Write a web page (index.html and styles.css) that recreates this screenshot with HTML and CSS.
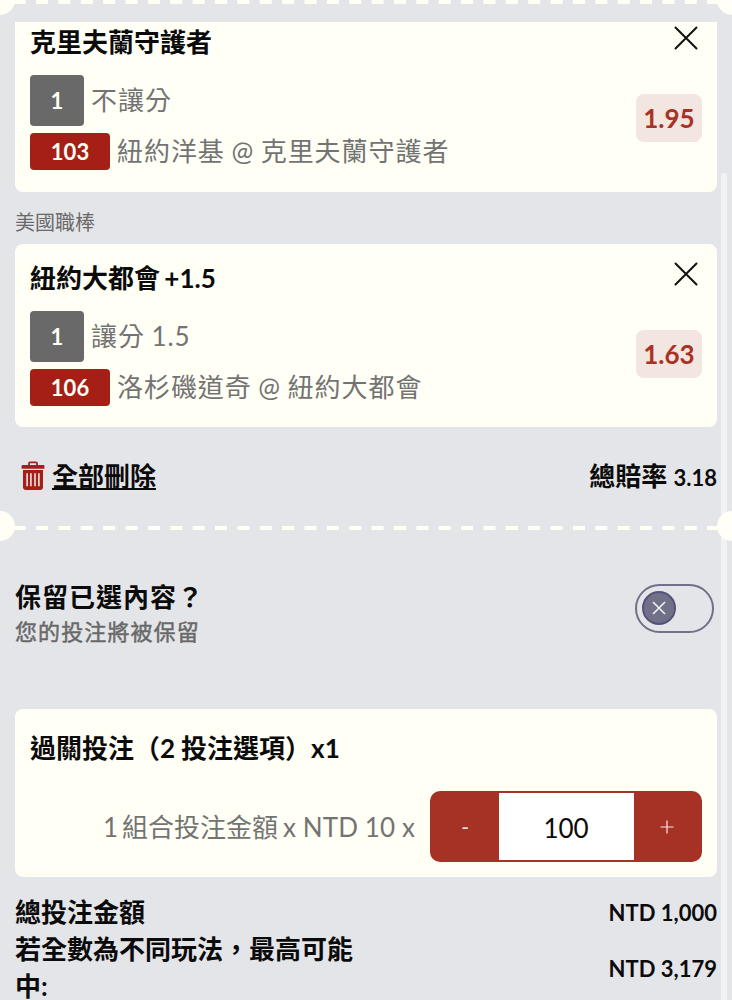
FILE: index.html
```
<!DOCTYPE html>
<html lang="zh-Hant">
<head>
<meta charset="utf-8">
<title>投注單</title>
<link rel="stylesheet" href="styles.css">
</head>
<body>
<main class="slip">
  <div class="perforation perforation-top"><i class="notch"></i><svg class="dashes" width="732" height="5"><path d="M13.7 2H722"/></svg><i class="notch notch-right"></i></div>
  <section class="card card-first">
    <div class="card-head"><h2 class="title">克里夫蘭守護者</h2><svg class="close" viewBox="0 0 24 24"><path d="M1.5 1.5 22.5 22.5M22.5 1.5 1.5 22.5"/></svg></div>
    <div class="card-body">
      <div class="bets">
        <div class="bet"><b class="count">1</b><span class="detail">不讓分</span></div>
        <div class="bet"><b class="code">103</b><span class="detail">紐約洋基 @ 克里夫蘭守護者</span></div>
      </div>
      <b class="odds">1.95</b>
    </div>
  </section>
  <p class="league">美國職棒</p>
  <section class="card">
    <div class="card-head"><h2 class="title">紐約大都會 +1.5</h2><svg class="close" viewBox="0 0 24 24"><path d="M1.5 1.5 22.5 22.5M22.5 1.5 1.5 22.5"/></svg></div>
    <div class="card-body">
      <div class="bets">
        <div class="bet"><b class="count">1</b><span class="detail">讓分 1.5</span></div>
        <div class="bet"><b class="code">106</b><span class="detail">洛杉磯道奇 @ 紐約大都會</span></div>
      </div>
      <b class="odds">1.63</b>
    </div>
  </section>
  <div class="actions">
    <a class="remove"><svg class="trash" viewBox="0 0 24 30"><path class="trash-body" fill-rule="evenodd" d="M2 9H22V26Q22 29 19 29H5Q2 29 2 26ZM5.3 12.2V25.3H6.9V12.2ZM9.1 12.2V25.3H10.7V12.2ZM13.2 12.2V25.3H14.8V12.2ZM17.1 12.2V25.3H18.7V12.2Z"/><path class="trash-body" d="M1.5 4H22.5Q23.4 4 23.4 5V7.8H.6V5Q.6 4 1.5 4Z"/><path class="trash-handle" d="M8 4V2Q8 1.3 9 1.3H15Q16 1.3 16 2V4"/></svg><span class="remove-label">全部刪除</span></a>
    <span class="total-odds">總賠率 <span class="num">3.18</span></span>
  </div>
  <div class="perforation"><i class="notch"></i><svg class="dashes" width="732" height="5"><path d="M13.7 2H722"/></svg><i class="notch notch-right"></i></div>
  <div class="keep">
    <div><div class="keep-title">保留已選內容？</div><div class="keep-note">您的投注將被保留</div></div>
    <span class="toggle"><span class="knob"><svg class="knob-x" viewBox="0 0 14 14"><path d="M1 1 13 13M13 1 1 13"/></svg></span></span>
  </div>
  <section class="card stake">
    <h2 class="title">過關投注（<span class="two">2</span>投注選項）x1</h2>
    <div class="stake-row">
      <span class="stake-label"><span class="one">1</span>組合投注金額<span class="unit">x NTD 10 x</span></span>
      <div class="stepper"><span class="step">-</span><span class="value">100</span><span class="step"><svg class="plus" viewBox="0 0 14 14"><path d="M7 .5V13.5M.5 7H13.5"/></svg></span></div>
    </div>
  </section>
  <div class="sum"><span>總投注金額</span><span class="num">NTD 1,000</span></div>
  <div class="sum"><span class="sum-label">若全數為不同玩法，最高可能中:</span><span class="num">NTD 3,179</span></div>
  <i class="scrollbar"></i>
</main>
</body>
</html>
```
FILE: styles.css
```
* { box-sizing: border-box; }
body { margin: 0; background: #e4e5e8; font-family: Lato, "Noto Sans CJK TC", sans-serif; color: #0b0b0b; }
.slip { position: relative; width: 732px; height: 1000px; overflow: hidden; padding: 0 15px; white-space: nowrap; }
h2, p { margin: 0; }

.perforation { position: relative; z-index: 2; height: 30px; margin: 0 -15px; display: flex; justify-content: space-between; }
.perforation-top { height: 30px; margin-top: -15px; }
.notch { width: 30px; height: 30px; border-radius: 50%; background: #fffff6; margin-left: -15px; }
.notch-right { margin: 0 -15px 0 0; }
.dashes { position: absolute; left: 0; top: 15px; stroke: #fffff6; stroke-width: 4; stroke-dasharray: 12 10.37; }

.card { height: 183px; padding: 15px; border-radius: 8px; background: #fffff6; }
.card-first { height: 170px; margin-top: 7px; padding-top: 1px; border-radius: 0 0 8px 8px; }
.card-head { display: flex; justify-content: space-between; height: 38px; }
.title { font-size: 26px; line-height: 38px; font-weight: 700; word-spacing: -2px; }
.close { width: 24px; height: 24px; margin: 3px 4px 0 0; stroke: #111; stroke-width: 2; stroke-linecap: round; fill: none; }
.card-body { display: flex; justify-content: space-between; margin-top: 13px; }
.bets { display: grid; align-content: start; gap: 7px; padding-top: 1px; }
.bet { display: flex; align-items: center; gap: 7px; }
.count, .code { display: flex; align-items: center; justify-content: center; color: #fffff6; font-size: 22px; border-radius: 4px; }
.count { width: 54px; height: 51px; background: #696969; }
.code { width: 80px; height: 37px; background: #a61f17; }
.detail { padding-bottom: 2px; font-size: 26px; letter-spacing: .95px; word-spacing: -1px; line-height: 34px; color: #737373; font-weight: 400; }
.odds { width: 66px; height: 48px; margin-top: 20px; border-radius: 8px; background: #f3e6e0; color: #a93226; font-size: 26px; line-height: 49px; text-align: center; }
.league { height: 52px; padding-top: 15px; font-size: 20px; line-height: 30px; color: #696969; }

.actions { display: flex; justify-content: space-between; align-items: center; height: 84px; padding-top: 15px; font-size: 26px; font-weight: 700; line-height: 38px; }
.remove { display: flex; align-items: center; gap: 7px; padding: 0 0 2px 6px; }
.trash { width: 24px; height: 30px; }
.trash-body { fill: #a61f17; }
.trash-handle { fill: none; stroke: #a61f17; stroke-width: 1.8; }
.remove-label { text-decoration: underline; text-decoration-thickness: 2px; text-underline-offset: 2px; }
.num { font-size: 22px; font-weight: 700; }

.keep { display: flex; justify-content: space-between; height: 168px; padding-top: 36px; }
.keep-title { padding-top: 1px; font-size: 26px; font-weight: 700; line-height: 38px; letter-spacing: 1px; }
.keep-note { font-size: 22px; line-height: 32px; letter-spacing: 1.1px; color: #696969; -webkit-text-stroke: .5px #696969; }
.toggle { display: flex; align-items: center; width: 79px; height: 49px; margin: 7px 3px 0 0; padding: 0 0 1px 5px; border: 2px solid #717089; border-radius: 25px; }
.knob { display: flex; align-items: center; justify-content: center; width: 34px; height: 34px; border-radius: 50%; border: 2px solid #55527a; background: #717089; }
.knob-x { width: 14px; height: 14px; stroke: #f2f2f5; stroke-width: 1.6; fill: none; }

.stake { height: 168px; padding-top: 20px; }
.two { margin-right: 6px; }
.stake-row { display: flex; justify-content: flex-end; align-items: center; gap: 15px; margin-top: 24px; }
.stake-label { padding-bottom: 3px; font-size: 26px; color: #737373; }
.one { margin-right: 4px; }
.unit { margin-left: 5px; letter-spacing: .1px; }
.stepper { display: flex; width: 272px; height: 71px; border: 2px solid #a63226; border-radius: 10px; background: #a63226; }
.step { flex: 1; display: flex; align-items: center; justify-content: center; color: #f6e7e2; font-size: 21px; }
.plus { width: 14px; height: 14px; stroke: #f6e7e2; stroke-width: 1.2; }
.value { width: 135px; background: #fff; font-size: 26px; line-height: 70px; text-align: center; }

.sum { display: flex; justify-content: space-between; align-items: center; font-size: 26px; font-weight: 700; line-height: 37px; }
.stake + .sum { margin-top: 17px; }
.sum-label { width: 350px; white-space: normal; }
.scrollbar { position: absolute; left: 721px; top: 173px; width: 6px; height: 840px; border-radius: 3px; background: #f1f2f4; }
```
